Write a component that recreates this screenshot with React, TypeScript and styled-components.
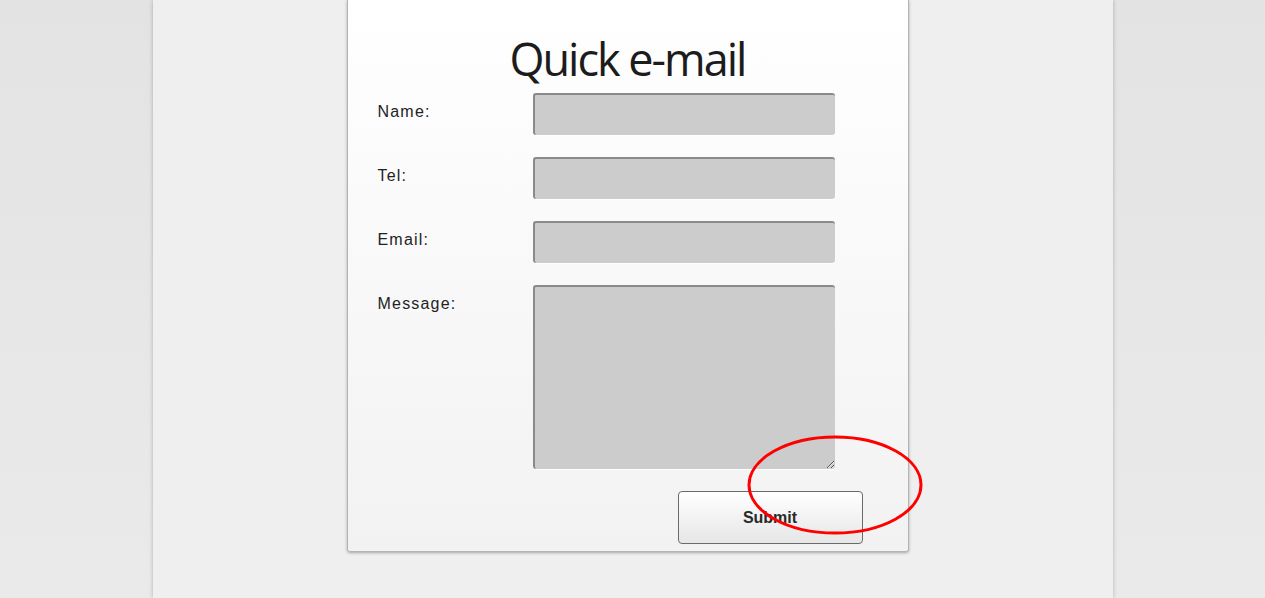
import React from "react";
import styled, { createGlobalStyle } from "styled-components";

const GlobalStyle = createGlobalStyle`
  html, body {
    margin: 0;
    padding: 0;
    height: 100%;
    overflow: hidden;
  }
  body {
    background: linear-gradient(to bottom, #e3e3e3 0%, #eaeaea 100%);
    font-family: "Liberation Sans", Arial, sans-serif;
  }
`;

const Page = styled.div`
  width: 960px;
  height: 598px;
  margin: 0 auto;
  background: #efefef;
  box-shadow: 0 0 4px rgba(0, 0, 0, 0.25);
  box-sizing: border-box;
`;

const Card = styled.div`
  width: 562px;
  margin-left: 194px;
  padding: 35px 0 7px 0;
  box-sizing: border-box;
  background: linear-gradient(to bottom, #ffffff 0%, #f2f2f2 100%);
  border: 1px solid #b4b4b4;
  border-top: none;
  border-radius: 0 0 3px 3px;
  box-shadow: 0 1px 3px rgba(0, 0, 0, 0.3);
  position: relative;
`;

const Title = styled.h1`
  margin: 0;
  font-family: "Open Sans", "Noto Sans", sans-serif;
  font-weight: 400;
  font-size: 45px;
  line-height: 48px;
  letter-spacing: -2px;
  color: #1c1c1c;
  text-align: center;
`;

const Form = styled.form`
  display: grid;
  grid-template-columns: 155px 302px;
  row-gap: 22px;
  padding: 10px 0 0 30px;
`;

const Label = styled.label`
  font-size: 16px;
  letter-spacing: 1.2px;
  color: #222;
  padding-top: 10px;
`;

const Field = styled.input`
  width: 302px;
  height: 42px;
  box-sizing: border-box;
  background: #cccccc;
  border: none;
  border-top: 2px solid #8a8a8a;
  border-left: 2px solid #8a8a8a;
  border-radius: 3px;
  box-shadow: 0 1px 0 #fff, 1px 0 0 #fafafa;
  outline: none;
  margin: 0;
`;

const Area = styled.textarea`
  width: 302px;
  height: 184px;
  box-sizing: border-box;
  background: #cccccc;
  border: none;
  border-top: 2px solid #8a8a8a;
  border-left: 2px solid #8a8a8a;
  border-radius: 3px;
  box-shadow: 0 1px 0 #fff;
  outline: none;
  margin: 0;
  resize: both;
`;

const Actions = styled.div`
  grid-column: 2;
  display: flex;
  justify-content: flex-end;
  margin-right: -28px;
`;

const SubmitButton = styled.button`
  width: 185px;
  height: 53px;
  border: 1px solid #6a6a6a;
  border-radius: 4px;
  background: linear-gradient(to bottom, #ffffff 0%, #e6e6e6 100%);
  font-family: "Liberation Sans", Arial, sans-serif;
  font-weight: 700;
  font-size: 16px;
  color: #2a2a2a;
`;

const Annotation = styled.svg`
  position: absolute;
  left: 398px;
  top: 435px;
  overflow: visible;
  pointer-events: none;
`;

const rows = ["Name:", "Tel:", "Email:"];

export default function App() {
  return (
    <>
      <GlobalStyle />
      <Page>
        <Card>
          <Title>Quick e-mail</Title>
          <Form onSubmit={(e) => e.preventDefault()}>
            {rows.map((r) => (
              <React.Fragment key={r}>
                <Label>{r}</Label>
                <Field type="text" />
              </React.Fragment>
            ))}
            <Label>Message:</Label>
            <Area />
            <Actions>
              <SubmitButton type="submit">Submit</SubmitButton>
            </Actions>
          </Form>
          <Annotation width="180" height="102">
            <ellipse cx="89" cy="50" rx="86" ry="48" fill="none" stroke="#f00" strokeWidth="3" />
          </Annotation>
        </Card>
      </Page>
    </>
  );
}
